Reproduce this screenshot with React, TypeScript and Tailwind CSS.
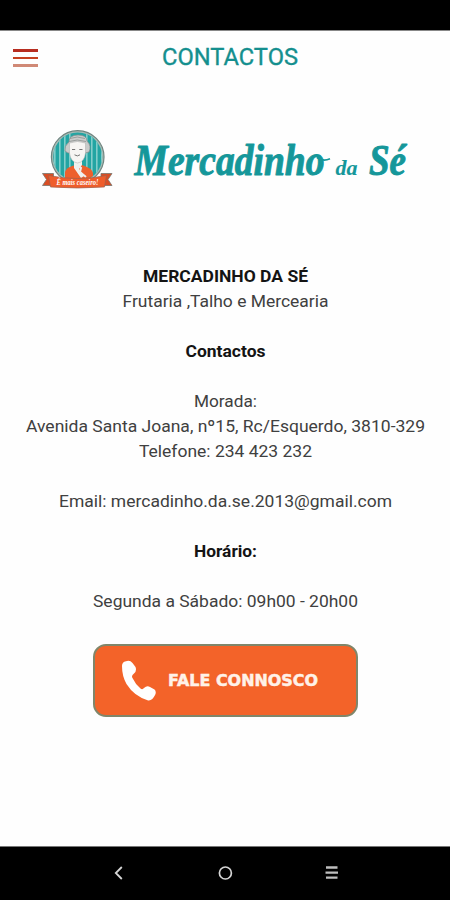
import React from 'react';

const TextLine: React.FC<{ text: string; width: number; bold?: boolean }> = ({ text, width, bold = false }) => (
  <svg width="450" height="25" className="block">
    <text
      x="225.5"
      y="18"
      textAnchor="middle"
      textLength={width}
      lengthAdjust="spacingAndGlyphs"
      className={bold ? 'fill-[#141414] font-bold' : 'fill-[#404040] font-normal'}
      fontSize="17.3"
    >
      {text}
    </text>
  </svg>
);

interface Line {
  text: string;
  width: number;
  bold?: boolean;
}

const paragraphs: Line[][] = [
  [
    { text: 'MERCADINHO DA SÉ', width: 165, bold: true },
    { text: 'Frutaria ,Talho e Mercearia', width: 206 },
  ],
  [{ text: 'Contactos', width: 80, bold: true }],
  [
    { text: 'Morada:', width: 63 },
    { text: 'Avenida Santa Joana, nº15, Rc/Esquerdo, 3810-329', width: 399 },
    { text: 'Telefone: 234 423 232', width: 173 },
  ],
  [{ text: 'Email: mercadinho.da.se.2013@gmail.com', width: 333 }],
  [{ text: 'Horário:', width: 63, bold: true }],
  [{ text: 'Segunda a Sábado: 09h00 - 20h00', width: 265 }],
];

const Badge = () => (
  <svg width="74" height="64" viewBox="40 127 74 64">
    <defs>
      <clipPath id="disc">
        <circle cx="77.7" cy="157" r="24.5" />
      </clipPath>
    </defs>
    <circle cx="77.7" cy="157" r="26.3" fill="#a9bcb6" stroke="#6f8580" strokeWidth="1.2" />
    <g clipPath="url(#disc)">
      <rect x="50" y="130" width="56" height="56" fill="#23a5a3" />
      {[54, 59, 64, 69, 86, 91, 96, 101].map((x) => (
        <rect key={x} x={x} y="130" width="1.6" height="56" fill="#83cdca" />
      ))}
      <path d="M65 180V172q1-4 7-6l4-1h6l5 2q5 2 6 6v7z" fill="#ed602d" />
      <path d="M74 158h8v7l-3 4 5 7-3 2-7-10z" fill="#f1f1ee" />
    </g>
    {/* Hair and face */}
    <path d="M65 151q-1-5 4-9 0-7 9-7 9 0 9 6 5 5 2 11l-4 1-14 0q-3 1-6-2z" fill="#c9cbca" stroke="#858b89" strokeWidth=".7" />
    <path d="M69.5 143q8-3 16 0v10q-1 9-8 10-7-1-8-10z" fill="#f6f5f3" stroke="#aaa" strokeWidth=".5" />
    <path d="M70 138.5q7-3 15 0M69 141.5q8-3 17 0" fill="none" stroke="#8d9290" strokeWidth=".8" />
    <path d="M72 149.5h3.2M79.3 149.5h3.2M74.5 154.8q3 2.2 5.5 0" fill="none" stroke="#666" strokeWidth=".9" />
    <path d="M77 165l4 3-1 4 6 5M79 168l-4-1" fill="none" stroke="#eee" strokeWidth="2" />
    {/* Ribbon */}
    <path d="M42.5 173.5h11v12h-11l4-6zM112 173.5h-11v12h11l-4-6z" fill="#d94e25" stroke="#78766f" strokeWidth=".8" />
    <path d="M48.5 175.5q29 6 58 0l-2 11.5q-27 2-54 0z" fill="#ef5d2b" stroke="#9b6250" strokeWidth=".7" />
    <text x="77.5" y="185" textAnchor="middle" textLength="42" lengthAdjust="spacingAndGlyphs" fontSize="7.5" fill="#fff" className="font-['Liberation_Serif',serif] font-bold italic">
      É mais caseiro!
    </text>
  </svg>
);

const Wordmark = () => (
  <svg
    width="280"
    height="64"
    viewBox="131 127 280 64"
    fill="#15979a"
    stroke="#15979a"
    strokeLinejoin="round"
    className="font-['Liberation_Serif',serif] font-bold italic"
  >
    <g transform="translate(134.5 174.5) scale(.83 1)">
      <text fontSize="45" strokeWidth="1" textLength="229" lengthAdjust="spacingAndGlyphs">Mercadinho</text>
    </g>
    <path d="M317 157.5q6 4.5 13 1.2" fill="none" strokeWidth="1.6" />
    <text x="335.5" y="175" fontSize="22" strokeWidth=".1">da</text>
    <g transform="translate(369 174.5) scale(.86 1)">
      <text fontSize="45" strokeWidth="1" textLength="43" lengthAdjust="spacingAndGlyphs">Sé</text>
    </g>
  </svg>
);

const Header = () => (
  <header className="relative flex h-[54px] justify-center">
    <button aria-label="Menu" className="absolute top-[18px] left-[13px] flex w-[25px] flex-col gap-[5px]">
      <span className="h-[2.5px] bg-[#b72d20]" />
      <span className="h-[2.5px] bg-[#c5401f]" />
      <span className="h-[2.5px] bg-[#d08976]" />
    </button>
    <svg width="150" height="50">
      <text x="80" y="34" textAnchor="middle" fontSize="24" fill="#148f8e" stroke="#148f8e" strokeWidth=".35" textLength="136" lengthAdjust="spacingAndGlyphs">CONTACTOS</text>
    </svg>
  </header>
);

const NavBar = () => (
  <nav className="h-[54px] border-t border-[#777] bg-black">
    <svg width="450" height="53" viewBox="0 847 450 53" fill="none" stroke="#d5d5d5">
      <path d="M121.8 867l-6 6 6 6" strokeWidth="1.8" />
      <circle cx="225.4" cy="873" r="6" strokeWidth="1.7" />
      <path d="M326 867.5h11.5M325.5 872.6h12.5M326 877.6h11.5" strokeWidth="2.4" stroke="#bebebe" />
    </svg>
  </nav>
);

export default function App() {
  return (
    <div className="flex h-[900px] w-[450px] flex-col overflow-hidden bg-[#fefefe] font-['Roboto',sans-serif]">
      <div className="h-[31px] shrink-0 border-b border-[#888] bg-black" />
      <Header />
      <main className="flex flex-1 flex-col items-center">
        <div className="mt-[42px] flex w-full gap-[17px] pl-10">
          <Badge />
          <Wordmark />
        </div>
        <div className="mt-[73px] flex flex-col gap-[25px]">
          {paragraphs.map((lines, i) => (
            <div key={i}>
              {lines.map((line) => (
                <TextLine key={line.text} {...line} />
              ))}
            </div>
          ))}
        </div>
        <button className="mt-[30px] ml-px flex h-[73px] w-[265px] items-center rounded-[13px] border-2 border-[#80866a] bg-[#f36329] pl-[26px]">
          <svg width="36" height="42" viewBox="0 0 36 42" fill="#fff">
            <path d="M1 6Q1 2 5 1.2Q9-.1 11.5 3L14.5 7Q16 11 13 13.5Q10 15.5 11.5 18Q14.5 24.5 19.5 28.5Q21.5 30 23 28Q26 25.2 29 27L33.5 29.5Q35.5 31.5 34.3 34.5Q31 41.5 26.5 40.2Q13 36 5.5 24Q1 16 1 6z" />
          </svg>
          <svg width="156" height="30" className="ml-2.5">
            <text x="1" y="19.5" fontSize="16" fill="#fff2e8" stroke="#fff2e8" strokeWidth=".5" textLength="150" lengthAdjust="spacingAndGlyphs" className="font-['DejaVu_Sans',sans-serif] font-bold">FALE CONNOSCO</text>
          </svg>
        </button>
      </main>
      <NavBar />
    </div>
  );
}
